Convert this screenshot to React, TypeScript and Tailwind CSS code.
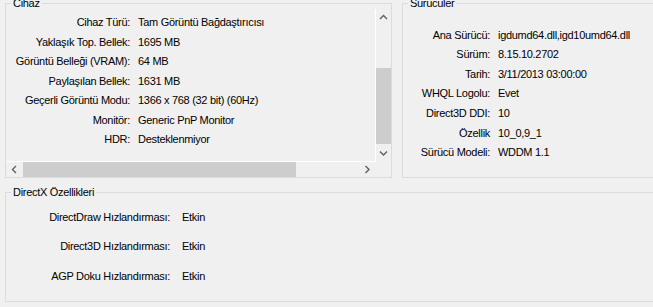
const device = [
  ['Cihaz Türü:', 'Tam Görüntü Bağdaştırıcısı'],
  ['Yaklaşık Top. Bellek:', '1695 MB'],
  ['Görüntü Belleği (VRAM):', '64 MB'],
  ['Paylaşılan Bellek:', '1631 MB'],
  ['Geçerli Görüntü Modu:', '1366 x 768 (32 bit) (60Hz)'],
  ['Monitör:', 'Generic PnP Monitor'],
  ['HDR:', 'Desteklenmiyor'],
];

const drivers = [
  ['Ana Sürücü:', 'igdumd64.dll,igd10umd64.dll'],
  ['Sürüm:', '8.15.10.2702'],
  ['Tarih:', '3/11/2013 03:00:00'],
  ['WHQL Logolu:', 'Evet'],
  ['Direct3D DDI:', '10'],
  ['Özellik', '10_0,9_1'],
  ['Sürücü Modeli:', 'WDDM 1.1'],
];

const features = [
  ['DirectDraw Hızlandırması:', 'Etkin'],
  ['Direct3D Hızlandırması:', 'Etkin'],
  ['AGP Doku Hızlandırması:', 'Etkin'],
];

function Chevron({ dir }: { dir: 'up' | 'down' | 'left' | 'right' }) {
  const d = {
    up: 'M1 5 L4.5 1.5 L8 5',
    down: 'M1 1.5 L4.5 5 L8 1.5',
    left: 'M5 1 L1.5 4.5 L5 8',
    right: 'M1.5 1 L5 4.5 L1.5 8',
  }[dir];
  const vertical = dir === 'up' || dir === 'down';
  return (
    <svg width={vertical ? 9 : 7} height={vertical ? 7 : 9} fill="none">
      <path d={d} stroke="#606060" strokeWidth="1.4" />
    </svg>
  );
}

export default function App() {
  return (
    <div className="w-[653px] h-[307px] overflow-hidden bg-[#f0f0f0] text-black text-[11px] tracking-[-0.3px] font-['Liberation_Sans',Arial,sans-serif]">
      <div className="-mt-[3px] pl-[5px] flex flex-col">
        <div className="flex gap-[10px]">
          {/* Cihaz */}
          <fieldset className="w-[387px] h-[181px] shrink-0 border border-[#dcdcdc]">
            <legend className="ml-[5px] px-[2px] leading-[12px]">Cihaz</legend>
            <div className="flex flex-col h-[168px]">
              <div className="flex">
                <div className="w-[370px] h-[153px] border-r border-b border-white overflow-hidden">
                  <div className="grid grid-cols-[124px_auto] gap-x-[8px] pt-[3.5px] whitespace-nowrap">
                    {device.map(([k, v]) => (
                      <div key={k} className="contents">
                        <span className="h-[19.5px] flex items-center justify-end">{k}</span>
                        <span className="h-[19.5px] flex items-center">{v}</span>
                      </div>
                    ))}
                  </div>
                </div>
                <div className="w-[15px] h-[153px] flex flex-col">
                  <div className="h-[17px] flex items-center justify-center">
                    <Chevron dir="up" />
                  </div>
                  <div className="h-[42px]" />
                  <div className="h-[76px] bg-[#cdcdcd]" />
                  <div className="h-[18px] flex items-center justify-center">
                    <Chevron dir="down" />
                  </div>
                </div>
              </div>
              <div className="flex h-[15px]">
                <div className="w-[17px] flex items-center justify-center">
                  <Chevron dir="left" />
                </div>
                <div className="w-[273px] bg-[#cdcdcd]" />
                <div className="w-[62px]" />
                <div className="w-[18px] flex items-center justify-center">
                  <Chevron dir="right" />
                </div>
                <div className="w-[15px]" />
              </div>
            </div>
          </fieldset>

          {/* Sürücüler */}
          <fieldset className="w-[270px] h-[181px] shrink-0 border border-[#dcdcdc]">
            <legend className="ml-[5px] px-[2px] leading-[12px]">Sürücüler</legend>
            <div className="grid grid-cols-[87px_auto] gap-x-[8px] pt-[16px] whitespace-nowrap">
              {drivers.map(([k, v]) => (
                <div key={k} className="contents">
                  <span className="h-[19.6px] flex items-center justify-end">{k}</span>
                  <span className="h-[19.6px] flex items-center">{v}</span>
                </div>
              ))}
            </div>
          </fieldset>
        </div>

        {/* DirectX Özellikleri */}
        <fieldset className="mt-[8px] w-[700px] h-[116px] shrink-0 border border-[#dcdcdc]">
          <legend className="ml-[5px] px-[2px] leading-[12px]">DirectX Özellikleri</legend>
          <div className="grid grid-cols-[164px_auto] gap-x-[12px] gap-y-[9.7px] pt-[9px] whitespace-nowrap">
            {features.map(([k, v]) => (
              <div key={k} className="contents">
                <span className="h-[20px] flex items-center justify-end">{k}</span>
                <span className="h-[20px] flex items-center">{v}</span>
              </div>
            ))}
          </div>
        </fieldset>
      </div>
    </div>
  );
}
